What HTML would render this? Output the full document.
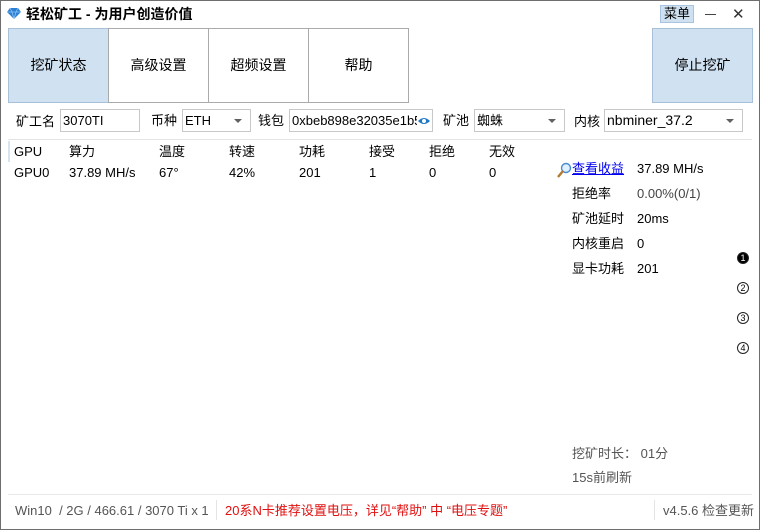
<!DOCTYPE html><html><head><meta charset="utf-8"><style>
*{margin:0;padding:0;box-sizing:border-box}
body{width:760px;height:530px;position:relative;background:#fff;font-family:"Liberation Sans","Noto Sans CJK SC",sans-serif;font-size:13px;line-height:17px;color:#000;overflow:hidden}
.frame{position:absolute;left:0;top:0;width:760px;height:530px;border:1px solid #6e6e6e}
.a{position:absolute;white-space:nowrap;line-height:17px}
.btn{position:absolute;top:28px;height:75px;width:101px;border:1px solid #aaa;background:#fff;display:flex;align-items:center;justify-content:center;font-size:14px}
.in{position:absolute;top:109px;height:23px;border:1px solid #c8c8c8;padding:2px 2px;font-size:13px;line-height:17px}
.dd::after{content:"";position:absolute;right:8px;top:9px;border-left:4px solid transparent;border-right:4px solid transparent;border-top:4px solid #606060}
.c{position:absolute;left:737px;width:12px;height:12px;border-radius:50%;border:1px solid #222;font-size:9px;line-height:10px;text-align:center}
</style></head><body>
<div class="frame"></div>
<svg class="a" style="left:6px;top:7px" width="16" height="13" viewBox="0 0 16 13"><path d="M1 5 L4 1 H12 L15 5 L8 12 Z" fill="#2a7fd4"/><path d="M1 5 H15 M4 1 L6 5 L8 12 M12 1 L10 5 L8 12" stroke="#8cc4f4" stroke-width=".8" fill="none"/></svg>
<div class="a" style="left:26px;top:6px;font-weight:bold;font-size:14px">轻松矿工 - 为用户创造价值</div>
<div class="a" style="left:660px;top:5px;width:34px;height:18px;background:#cfe0f0;border:1px solid #a8c4e0;text-align:center;font-size:13px;line-height:16px">菜单</div>
<div class="a" style="left:705px;top:14px;width:11px;height:1px;background:#444"></div>
<div class="a" style="left:732px;top:6px;font-size:15px;color:#333">✕</div>
<div class="btn" style="left:8px;background:#d0e2f2;border-color:#a8c0d8">挖矿状态</div>
<div class="btn" style="left:108px">高级设置</div>
<div class="btn" style="left:208px">超频设置</div>
<div class="btn" style="left:308px">帮助</div>
<div class="btn" style="left:652px;background:#d0e2f2;border-color:#a8c0d8">停止挖矿</div>
<div class="a" style="left:16px;top:113px">矿工名</div>
<div class="in" style="left:60px;width:80px">3070TI</div>
<div class="a" style="left:151px;top:112px">币种</div>
<div class="in dd" style="left:182px;width:69px">ETH</div>
<div class="a" style="left:258px;top:112px">钱包</div>
<div class="in" style="left:289px;width:144px;overflow:hidden">0xbeb898e32035e1b5</div>
<svg class="a" style="left:417px;top:115px" width="14" height="12" viewBox="0 0 14 12"><rect width="14" height="12" fill="#fff"/><path d="M1 6 Q7 0 13 6 Q7 12 1 6Z" fill="#1e78c8"/><circle cx="7" cy="6" r="2" fill="#fff"/></svg>
<div class="a" style="left:443px;top:112px">矿池</div>
<div class="in dd" style="left:474px;width:91px">蜘蛛</div>
<div class="a" style="left:574px;top:113px">内核</div>
<div class="in dd" style="left:604px;width:139px;font-size:14px">nbminer_37.2</div>
<div class="a" style="left:8px;top:139px;width:744px;height:1px;background:#e4e4e4"></div>
<div class="a" style="left:8px;top:141px;width:2px;height:21px;background:#d6e4f0"></div>
<div class="a" style="left:14px;top:143px">GPU</div><div class="a" style="left:69px;top:143px">算力</div><div class="a" style="left:159px;top:143px">温度</div><div class="a" style="left:229px;top:143px">转速</div><div class="a" style="left:299px;top:143px">功耗</div><div class="a" style="left:369px;top:143px">接受</div><div class="a" style="left:429px;top:143px">拒绝</div><div class="a" style="left:489px;top:143px">无效</div>
<div class="a" style="left:14px;top:164px">GPU0</div><div class="a" style="left:69px;top:164px">37.89 MH/s</div><div class="a" style="left:159px;top:164px">67°</div><div class="a" style="left:229px;top:164px">42%</div><div class="a" style="left:299px;top:164px">201</div><div class="a" style="left:369px;top:164px">1</div><div class="a" style="left:429px;top:164px">0</div><div class="a" style="left:489px;top:164px">0</div>
<svg class="a" style="left:557px;top:162px" width="15" height="16" viewBox="0 0 15 16"><circle cx="9" cy="6" r="4.5" fill="#dff0ff" stroke="#4a8ad0" stroke-width="1.4"/><path d="M6 9 L1 15" stroke="#b07a30" stroke-width="2.4"/></svg>
<div class="a" style="left:572px;top:160px;color:#0000ee;text-decoration:underline">查看收益</div>
<div class="a" style="left:637px;top:160px">37.89 MH/s</div>
<div class="a" style="left:572px;top:185px">拒绝率</div><div class="a" style="left:637px;top:185px;color:#444">0.00%(0/1)</div>
<div class="a" style="left:572px;top:210px">矿池延时</div><div class="a" style="left:637px;top:210px">20ms</div>
<div class="a" style="left:572px;top:235px">内核重启</div><div class="a" style="left:637px;top:235px">0</div>
<div class="a" style="left:572px;top:260px">显卡功耗</div><div class="a" style="left:637px;top:260px">201</div>
<div class="c" style="top:252px;background:#000;color:#fff">1</div>
<div class="c" style="top:282px">2</div>
<div class="c" style="top:312px">3</div>
<div class="c" style="top:342px">4</div>
<div class="a" style="left:572px;top:445px;color:#555">挖矿时长： 01分</div>
<div class="a" style="left:572px;top:469px;color:#555">15s前刷新</div>
<div class="a" style="left:8px;top:494px;width:744px;height:1px;background:#e8e8e8"></div>
<div class="a" style="left:15px;top:502px;color:#555">Win10 &nbsp;/ 2G / 466.61 / 3070 Ti x 1</div>
<div class="a" style="left:216px;top:500px;width:1px;height:20px;background:#e4e4e4"></div>
<div class="a" style="left:225px;top:502px;color:#e01010">20系N卡推荐设置电压，详见“帮助” 中 “电压专题”</div>
<div class="a" style="left:654px;top:500px;width:1px;height:20px;background:#e4e4e4"></div>
<div class="a" style="left:663px;top:502px;color:#555">v4.5.6 检查更新</div>
</body></html>
